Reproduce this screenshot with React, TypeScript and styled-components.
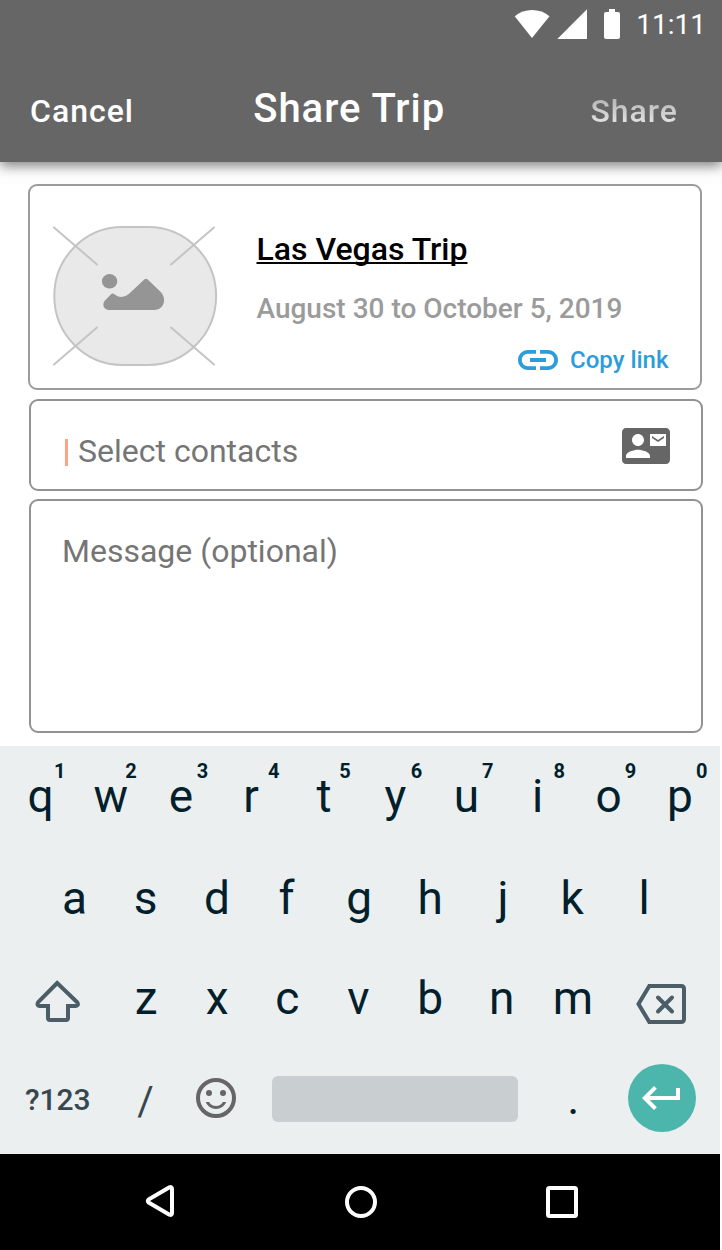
import React from "react";
import styled, { createGlobalStyle } from "styled-components";

const GlobalStyle = createGlobalStyle`
  *, *::before, *::after { box-sizing: border-box; }
  body {
    margin: 0;
    background: #fff;
    font-family: Roboto, "Liberation Sans", sans-serif;
  }
  svg { display: block; flex: none; }
`;

const Screen = styled.div`
  width: 722px;
  height: 1250px;
  display: flex;
  flex-direction: column;
  overflow: hidden;
`;

const Header = styled.header`
  height: 162px;
  flex: none;
  background: #666;
  color: #fff;
  box-shadow: 0 4px 12px rgba(0, 0, 0, 0.5);
`;

const StatusBar = styled.div`
  height: 48px;
  padding: 0 16px 0 514px;
  display: flex;
  align-items: center;
  justify-content: space-between;
`;

const Clock = styled.span`
  margin-top: 2px;
  font-size: 28px;
  line-height: 48px;
`;

const AppBar = styled.div`
  height: 114px;
  padding: 37px 44px 0 30px;
  display: flex;
  align-items: baseline;
  justify-content: space-between;
`;

const Title = styled.h1`
  margin: 0 26px 0 0;
  font-size: 40px;
  font-weight: 500;
  line-height: 48px;
  letter-spacing: 1px;
`;

const BarAction = styled.button<{ $muted?: boolean }>`
  padding: 0;
  border: 0;
  background: ${(p) => (p.$muted ? "linear-gradient(#b4b4b4 15%, #dedede 75%)" : "none")};
  ${(p) => p.$muted && "background-clip: text;"}
  color: ${(p) => (p.$muted ? "transparent" : "#fff")};
  font: 500 32px/38px Roboto, sans-serif;
  letter-spacing: 1px;
`;

const Form = styled.main`
  flex: 1;
  padding: 22px 19px 0 29px;
  display: flex;
  flex-direction: column;
`;

const Panel = styled.section<{ $height: number; $line?: string }>`
  height: ${(p) => p.$height}px;
  flex: none;
  display: flex;
  border: 2px solid ${(p) => p.$line ?? "#929292"};
  border-radius: 9px;
  background: #fff;
`;

const TripPanel = styled(Panel)`
  margin: 0 1px 9px -1px;
  padding: 40px 0 0 23px;
  gap: 38.5px;
`;

const TripInfo = styled.div`
  flex: 1;
  display: flex;
  flex-direction: column;
  align-items: flex-start;
`;

const TripName = styled.a`
  margin-top: 4px;
  color: #000;
  font-size: 32px;
  font-weight: 500;
  line-height: 38px;
  text-decoration: underline;
  text-decoration-thickness: 2px;
  text-underline-offset: 2px;
  text-decoration-skip-ink: none;
`;

const TripDates = styled.p`
  margin: 24px 0 0;
  color: #9b9b9b;
  font-size: 28px;
  font-weight: 500;
  line-height: 34px;
`;

const CopyLink = styled.a`
  margin: 10px 31.5px 0 0;
  align-self: flex-end;
  display: flex;
  align-items: center;
  gap: 8px;
  color: #2d9cdb;
  font-size: 24px;
  font-weight: 500;
  line-height: 48px;
`;

const ContactsField = styled(Panel)`
  margin-bottom: 8px;
  padding: 2px 31px 0 34px;
  align-items: center;
`;

const Caret = styled.i`
  width: 2.5px;
  height: 27px;
  margin: 13px 10.5px 0 0;
  background: #ffa387;
`;

const Placeholder = styled.span`
  flex: 1;
  color: #757575;
  font-size: 32px;
  line-height: 38px;
`;

const ContactsHint = styled(Placeholder)`
  margin-top: 10px;
`;

const MessageField = styled(Panel)`
  padding: 31px 31px 0;
`;

const Keyboard = styled.section`
  width: 720px;
  height: 408px;
  flex: none;
  background: #ebeff0;
  color: #021f2b;
`;

const KeyRow = styled.div<{ $inset?: number; $drop?: number }>`
  height: 100.7px;
  padding: ${(p) => p.$drop ?? 0}px 0 0 ${(p) => p.$inset ?? 0}px;
  display: flex;
  align-items: center;
`;

const Key = styled.div<{ $width?: number; $nudge?: number }>`
  width: ${(p) => p.$width ?? 71.15}px;
  height: 100%;
  padding-left: ${(p) => Math.max(0, (p.$nudge ?? 0) * 2)}px;
  padding-right: ${(p) => Math.max(0, (p.$nudge ?? 0) * -2)}px;
  position: relative;
  flex: none;
  display: flex;
  align-items: center;
  justify-content: center;
  font-size: 46px;
  line-height: 56px;
`;

const IconKey = styled(Key)<{ $drop?: number }>`
  padding-top: ${(p) => p.$drop ?? 0}px;
`;

const SlashKey = styled(Key)`
  padding-top: 8px;
  color: #37474f;
  font-size: 40px;
`;

const ModeKey = styled(Key)`
  padding-top: 3px;
  color: #37474f;
  font-size: 30px;
  font-weight: 500;
`;

const KeyDigit = styled.sup<{ $column: number }>`
  position: absolute;
  top: 13px;
  left: ${(p) => 50 + p.$column * 0.2}px;
  font-size: 20px;
  font-weight: 700;
  line-height: 24px;
`;

const SpaceBar = styled.div`
  width: 246px;
  height: 46px;
  margin: 1px 20px 0 20px;
  border-radius: 6px;
  background: #c9ced1;
`;

const EnterKey = styled.div`
  width: 68px;
  height: 68px;
  margin-left: 19.5px;
  display: flex;
  align-items: center;
  justify-content: center;
  border-radius: 50%;
  background: #4db6ac;
`;

const NavBar = styled.nav`
  width: 720px;
  height: 96px;
  flex: none;
  padding: 0 142px 0 144px;
  display: flex;
  align-items: center;
  justify-content: space-between;
  background: #000;
`;

const StatusIcons = () => (
  <svg width="107" height="48" viewBox="514 0 107 48" fill="#fff">
    <path d="M514.7 16.3a27.2 27.2 0 0 1 34.8 0L532 38z" />
    <path d="M587 9.3V39H557.3z" />
    <path d="M609 9h6v3h3a2 2 0 0 1 2 2v23a2 2 0 0 1-2 2h-12a2 2 0 0 1-2-2V14a2 2 0 0 1 2-2h3z" />
  </svg>
);

const PhotoPlaceholder = () => (
  <svg width="165" height="141" viewBox="53 226 165 141">
    <rect x="54.3" y="227" width="161.8" height="138" rx="68" ry="69" fill="#e9e9e9" stroke="#c4c4c4" strokeWidth="2" />
    <path
      d="M54 227.5l43 37M214 227.5l-43 37M97 327.5L54 364.5M171 327.5l43 37"
      fill="none"
      stroke="#c4c4c4"
      strokeWidth="2"
      strokeLinecap="round"
    />
    <g fill="#959595">
      <ellipse cx="109.6" cy="281.3" rx="7.7" ry="7.3" />
      <path d="M109 310C104 310 101.500 304.500 105 300.500L111 294.300Q112.700 292.700 114.700 294.500Q121.500 299.800 128.500 294.200L144 279.800Q146 277.800 148 279.800L161 292.300C167.500 300 163 310 154.500 310z" />
    </g>
  </svg>
);

const LinkIcon = () => (
  <svg width="48" height="48" viewBox="0 0 24 24" fill="#2d9cdb">
    <path d="M3.900 12c0-1.710 1.390-3.100 3.100-3.100h4V7H7c-2.760 0-5 2.240-5 5s2.240 5 5 5h4v-1.900H7c-1.710 0-3.100-1.390-3.100-3.100zM8 13h8v-2H8v2zm9-6h-4v1.900h4c1.710 0 3.100 1.390 3.100 3.100s-1.390 3.100-3.100 3.100h-4V17h4c2.760 0 5-2.240 5-5s-2.240-5-5-5z" />
  </svg>
);

const ContactsIcon = () => (
  <svg width="48" height="48" viewBox="0 0 24 24" fill="#666">
    <path d="M21 8V7l-3 2-3-2v1l3 2 3-2zm1-5H2C.9 3 0 3.900 0 5v14c0 1.100.9 2 2 2h20c1.100 0 1.990-.9 1.990-2L24 5c0-1.100-.9-2-2-2zM8 6c1.660 0 3 1.340 3 3s-1.340 3-3 3-3-1.340-3-3 1.340-3 3-3zm6 12H2v-1c0-2 4-3.100 6-3.100s6 1.100 6 3.100v1zm8-6h-8V6h8v6z" />
  </svg>
);

const ShiftIcon = () => (
  <svg width="46" height="42" viewBox="35 980 46 42" fill="none" stroke="#4b5d66" strokeWidth="4">
    <path d="M57.200 983L38.200 1002.200Q36.400 1005.700 39.500 1006H48v12q0 2 2 2h16q2 0 2-2v-12h7.500Q79.200 1005.700 77.200 1002.200z" />
  </svg>
);

const BackspaceIcon = () => (
  <svg width="51" height="40" viewBox="636 984 51 40" fill="none" stroke="#4b5d66" strokeWidth="4">
    <path d="M649.300 986H681q3 0 3 3v30q0 3-3 3H649.300L638.500 1004z" />
    <path d="M658 997.500l14 14M672 997.500l-14 14" strokeLinecap="round" />
  </svg>
);

const SmileIcon = () => (
  <svg width="48" height="48" viewBox="0 0 24 24" fill="#666">
    <circle cx="12" cy="12" r="9" fill="none" stroke="#666" strokeWidth="2" />
    <circle cx="8.500" cy="9.500" r="1.500" />
    <circle cx="15.500" cy="9.500" r="1.500" />
    <path d="M12 16c-1.480 0-2.750-.81-3.450-2H6.880c.8 2.050 2.790 3.500 5.120 3.500s4.320-1.450 5.120-3.500h-1.670c-.7 1.190-1.970 2-3.450 2z" />
  </svg>
);

const EnterIcon = () => (
  <svg width="48" height="48" viewBox="0 0 24 24" fill="#fff">
    <path d="M19 7v4H5.830l3.580-3.590L8 6l-6 6 6 6 1.410-1.410L5.830 13H21V7z" />
  </svg>
);

const BackIcon = () => (
  <svg width="31" height="34" viewBox="144 1185 31 34" fill="none" stroke="#fff" strokeWidth="4" strokeLinejoin="round">
    <path d="M148.600 1199.400L169.500 1187.300Q172 1186.500 172 1189V1213Q172 1215.500 169.500 1214.700L148.600 1202.600Q147 1201 148.600 1199.400z" />
  </svg>
);

const HomeIcon = () => (
  <svg width="32" height="32" viewBox="0 0 32 32" fill="none" stroke="#fff" strokeWidth="4">
    <circle cx="16" cy="16" r="14" />
  </svg>
);

const RecentsIcon = () => (
  <svg width="32" height="32" viewBox="0 0 32 32" fill="none" stroke="#fff" strokeWidth="4">
    <rect x="2" y="2" width="28" height="28" rx="1.500" />
  </svg>
);

/* Optical adjustment of single letters inside their key, in pixels. */
const nudges: Record<string, number> = { q: 1, e: -1, r: -2, f: -1.5, j: 1.5, l: 0.5, c: -1, v: -1, b: -0.5, k: -0.5 };

export default function App() {
  return (
    <>
      <GlobalStyle />
      <Screen>
        <Header>
          <StatusBar>
            <StatusIcons />
            <Clock>11:11</Clock>
          </StatusBar>
          <AppBar>
            <BarAction>Cancel</BarAction>
            <Title>Share Trip</Title>
            <BarAction $muted>Share</BarAction>
          </AppBar>
        </Header>

        <Form>
          <TripPanel $height={206} $line="#9b9b9b">
            <PhotoPlaceholder />
            <TripInfo>
              <TripName>Las Vegas Trip</TripName>
              <TripDates>August 30 to October 5, 2019</TripDates>
              <CopyLink>
                <LinkIcon />
                Copy link
              </CopyLink>
            </TripInfo>
          </TripPanel>
          <ContactsField $height={92}>
            <Caret />
            <ContactsHint>Select contacts</ContactsHint>
            <ContactsIcon />
          </ContactsField>
          <MessageField $height={234}>
            <Placeholder>Message (optional)</Placeholder>
          </MessageField>
        </Form>

        <Keyboard>
          <KeyRow $inset={4}>
            {[..."qwertyuiop"].map((letter, i) => (
              <Key key={letter} $nudge={nudges[letter]}>
                {letter}
                <KeyDigit $column={i}>{(i + 1) % 10}</KeyDigit>
              </Key>
            ))}
          </KeyRow>
          <KeyRow $inset={39} $drop={2}>
            {[..."asdfghjkl"].map((letter) => (
              <Key key={letter} $nudge={nudges[letter]}>
                {letter}
              </Key>
            ))}
          </KeyRow>
          <KeyRow $inset={5}>
            <IconKey $width={105.5} $drop={7}>
              <ShiftIcon />
            </IconKey>
            {[..."zxcvbnm"].map((letter) => (
              <Key key={letter} $nudge={nudges[letter]}>
                {letter}
              </Key>
            ))}
            <IconKey $width={106.5} $drop={12}>
              <BackspaceIcon />
            </IconKey>
          </KeyRow>
          <KeyRow $inset={5}>
            <ModeKey $width={105.5}>?123</ModeKey>
            <SlashKey $width={70.15}>/</SlashKey>
            <IconKey>
              <SmileIcon />
            </IconKey>
            <SpaceBar />
            <Key>.</Key>
            <EnterKey>
              <EnterIcon />
            </EnterKey>
          </KeyRow>
        </Keyboard>

        <NavBar>
          <BackIcon />
          <HomeIcon />
          <RecentsIcon />
        </NavBar>
      </Screen>
    </>
  );
}
